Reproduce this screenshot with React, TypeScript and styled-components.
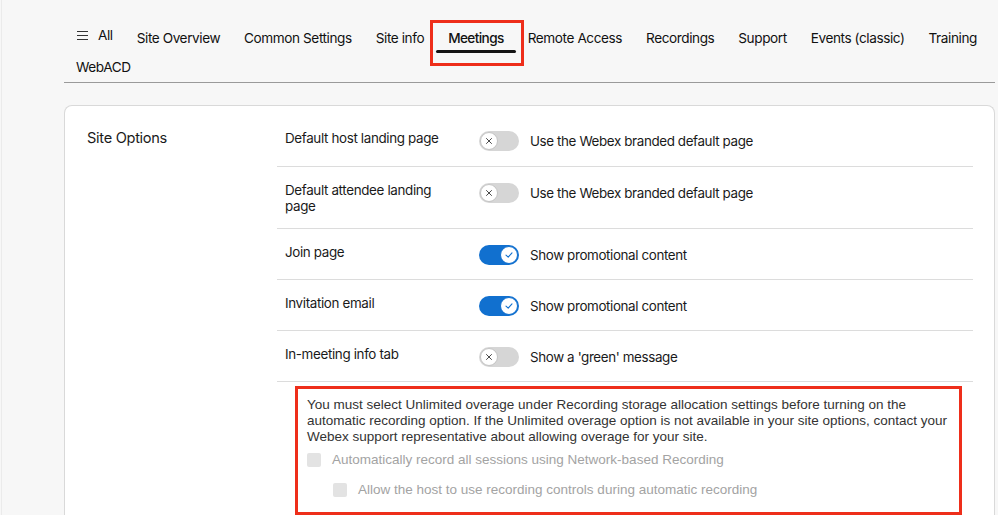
import React from "react";
import styled, { createGlobalStyle } from "styled-components";

const GlobalStyle = createGlobalStyle`
    html, body {
        margin: 0;
        padding: 0;
        background: #f7f7f7;
        font-family: Inter, "Noto Sans", sans-serif;
        color: #1a1a1a;
    }
`;

const tabs = [
    "Site Overview",
    "Common Settings",
    "Site info",
    "Meetings",
    "Remote Access",
    "Recordings",
    "Support",
    "Events (classic)",
    "Training",
    "WebACD",
];

interface IOption {
    label:  string;
    text:   string;
    on:     boolean;
}

const options: IOption[] = [
    { label: "Default host landing page", text: "Use the Webex branded default page", on: false },
    { label: "Default attendee landing page", text: "Use the Webex branded default page", on: false },
    { label: "Join page", text: "Show promotional content", on: true },
    { label: "Invitation email", text: "Show promotional content", on: true },
    { label: "In-meeting info tab", text: "Show a 'green' message", on: false },
];

const Toggle = ({ on } : { on: boolean }) => (
    <Track $on={on}>
        <Knob $on={on}>
            {on ? (
                <svg width="10" height="10" viewBox="0 0 10 10">
                    <path d="M2 5.2 L4.2 7.2 L8 2.8" fill="none" stroke="#1170cf" strokeWidth="1.1" strokeLinecap="round" strokeLinejoin="round" />
                </svg>
            ) : (
                <svg width="8" height="8" viewBox="0 0 8 8">
                    <path d="M1.5 1.5 L6.5 6.5 M6.5 1.5 L1.5 6.5" fill="none" stroke="#4a4a4a" strokeWidth="1" strokeLinecap="round" />
                </svg>
            )}
        </Knob>
    </Track>
);

const App = () => {
    return (
        <>
            <GlobalStyle />
            <Page>
                <Nav>
                    <Tab $first>
                        <Burger>
                            <span /><span /><span />
                        </Burger>
                        <AllText>All</AllText>
                    </Tab>
                    {tabs.map(tab => (
                        <Tab key={tab} $active={tab === "Meetings"}>{tab}</Tab>
                    ))}
                </Nav>
                <Card>
                    <SectionTitle>Site Options</SectionTitle>
                    <Rows>
                        {options.map(option => (
                            <Row key={option.label}>
                                <Label>{option.label}</Label>
                                <Control>
                                    <Toggle on={option.on} />
                                    <span>{option.text}</span>
                                </Control>
                            </Row>
                        ))}
                        <Notice>
                            <NoticeText>
                                You must select Unlimited overage under Recording storage allocation settings before turning on the<br />
                                automatic recording option. If the Unlimited overage option is not available in your site options, contact your<br />
                                Webex support representative about allowing overage for your site.
                            </NoticeText>
                            <Check>
                                <Box />
                                <span>Automatically record all sessions using Network-based Recording</span>
                            </Check>
                            <Check $nested>
                                <Box />
                                <span>Allow the host to use recording controls during automatic recording</span>
                            </Check>
                        </Notice>
                        <BottomLine />
                    </Rows>
                </Card>
            </Page>
        </>
    );
};

const Page = styled.div`
    position: relative;
    height: 515px;
    overflow: hidden;
    padding: 24px 3px 0 64px;
    box-sizing: border-box;

    &::before {
        content: "";
        position: absolute;
        top: 0;
        bottom: 0;
        left: 1px;
        width: 1px;
        background: #ebebeb;
    }
`;

const Nav = styled.nav`
    display: flex;
    flex-wrap: wrap;
    width: 931px;
    border-bottom: 1px solid #9a9a9a;
`;

const Tab = styled.div<{ $active?: boolean; $first?: boolean }>`
    position: relative;
    display: flex;
    align-items: flex-start;
    height: 29px;
    box-sizing: border-box;
    padding: 4px 12px 0 ${p => p.$first ? "13px" : "12px"};
    font-size: 13.6px;
    letter-spacing: -0.42px;
    line-height: 20px;
    color: #111;
    white-space: nowrap;

    ${p => p.$active && `
        font-weight: 500;
        letter-spacing: -0.6px;
        &::after {
            content: "";
            position: absolute;
            left: 0;
            right: 0;
            bottom: 0;
            height: 3px;
            border-radius: 2px;
            background: #141414;
        }
        &::before {
            content: "";
            position: absolute;
            top: -4px;
            left: -6px;
            right: -8px;
            bottom: -13px;
            border: 3px solid #ee2e1a;
        }
    `}
`;

const Burger = styled.div`
    display: flex;
    flex-direction: column;
    justify-content: space-between;
    width: 11px;
    height: 9px;
    margin: 3px 10px 0 0;

    & span {
        display: block;
        height: 1.3px;
        background: #333;
    }
`;

const AllText = styled.span`
    margin-top: -3px;
`;

const Card = styled.section`
    display: flex;
    margin-top: 22px;
    width: 931px;
    box-sizing: border-box;
    padding: 9px 21px 0 22px;
    background: #fff;
    border: 1px solid #d9d9d9;
    border-bottom: none;
    border-radius: 8px 8px 0 0;
    height: 420px;
`;

const SectionTitle = styled.h2`
    width: 190px;
    flex-shrink: 0;
    margin: 13px 0 0;
    font-size: 14.6px;
    letter-spacing: -0.3px;
    font-weight: 400;
    line-height: 20px;
    color: #1a1a1a;
`;

const Rows = styled.div`
    flex: 1;
    display: flex;
    flex-direction: column;
`;

const Row = styled.div`
    display: flex;
    align-items: flex-start;
    padding: 15px 8px 14px;
    border-bottom: 1px solid #dcdcdc;

    &:first-child {
        padding-bottom: 15px;
    }
`;

const Label = styled.div`
    width: 180px;
    margin-right: 14px;
    font-size: 13.4px;
    letter-spacing: -0.35px;
    line-height: 16px;
    color: #1a1a1a;
`;

const Control = styled.div`
    display: flex;
    align-items: center;
    gap: 11px;
    margin-top: 1px;
    font-size: 13.4px;
    letter-spacing: -0.38px;
    line-height: 20px;
    color: #1a1a1a;
`;

const Track = styled.div<{ $on: boolean }>`
    display: flex;
    align-items: center;
    justify-content: ${p => p.$on ? "flex-end" : "flex-start"};
    width: 40px;
    height: 20px;
    box-sizing: border-box;
    padding: 0 1px;
    border-radius: 10px;
    background: ${p => p.$on ? "#1170cf" : "#d6d6d6"};
`;

const Knob = styled.div<{ $on: boolean }>`
    display: flex;
    align-items: center;
    justify-content: center;
    width: 18px;
    height: 18px;
    box-sizing: border-box;
    border-radius: 50%;
    background: #fff;
    border: 1px solid ${p => p.$on ? "#1170cf" : "#c4c4c4"};
`;

const Notice = styled.div`
    margin: 4px 11px 0 18px;
    padding: 8px 2px 14px 9px;
    border: 3px solid #ee2e1a;
`;

const NoticeText = styled.p`
    margin: 0;
    font-family: "Liberation Sans", Arial, sans-serif;
    font-size: 13.5px;
    line-height: 16px;
    color: #333;
    white-space: nowrap;
`;

const Check = styled.div<{ $nested?: boolean }>`
    display: flex;
    align-items: center;
    gap: 11px;
    margin: ${p => p.$nested ? "14px 0 0 26px" : "7px 0 0 0"};
    font-family: "Liberation Sans", Arial, sans-serif;
    font-size: 13.5px;
    line-height: 16px;
    color: #a3a3a3;
`;

const Box = styled.div`
    width: 14px;
    height: 14px;
    border-radius: 2px;
    background: #e3e3e3;
    flex-shrink: 0;
`;

const BottomLine = styled.div`
    height: 1px;
    background: #dcdcdc;
`;

export default App;
